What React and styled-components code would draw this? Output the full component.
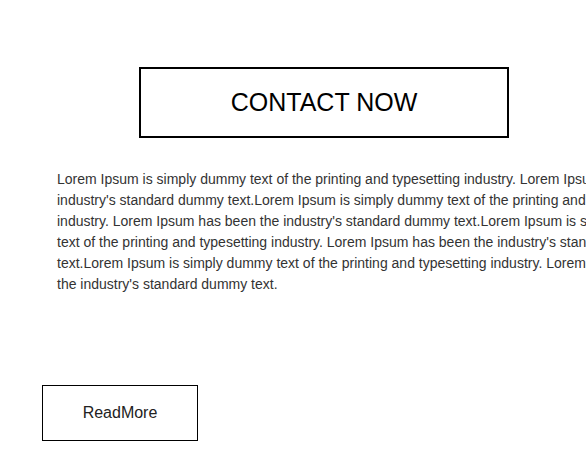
import React from 'react';
import styled, { createGlobalStyle } from 'styled-components';

const GlobalStyle = createGlobalStyle`
  html, body {
    margin: 0;
    padding: 0;
    background: #fff;
    overflow: hidden;
  }
  body {
    font-family: "Liberation Sans", Arial, sans-serif;
  }
`;

const Page = styled.div`
  display: flex;
  flex-direction: column;
  align-items: flex-start;
  padding-top: 67px;
  width: 100vw;
  height: 100vh;
  overflow: hidden;
`;

const ContactButton = styled.button`
  display: flex;
  align-items: center;
  justify-content: center;
  box-sizing: border-box;
  width: 370px;
  height: 71px;
  margin-left: 139px;
  border: 2px solid #000;
  background: #fff;
  color: #000;
  font-family: inherit;
  font-size: 25px;
  padding: 0;
  cursor: pointer;
`;

const Text = styled.p`
  flex: none;
  width: 634px;
  margin: 31px 0 0 57px;
  font-size: 14px;
  line-height: 21px;
  color: #333;
`;

const ReadMore = styled.button`
  display: flex;
  align-items: center;
  justify-content: center;
  box-sizing: border-box;
  width: 156px;
  height: 56px;
  margin: 90px 0 0 42px;
  border: 1px solid #000;
  background: #fff;
  color: #222;
  font-family: inherit;
  font-size: 16px;
  padding: 0;
  cursor: pointer;
`;

const lorem =
  "Lorem Ipsum is simply dummy text of the printing and typesetting industry. Lorem Ipsum has been the industry's standard dummy text.";

export default function App() {
  return (
    <>
      <GlobalStyle />
      <Page>
        <ContactButton>CONTACT NOW</ContactButton>
        <Text>{lorem.repeat(4)}</Text>
        <ReadMore>ReadMore</ReadMore>
      </Page>
    </>
  );
}
